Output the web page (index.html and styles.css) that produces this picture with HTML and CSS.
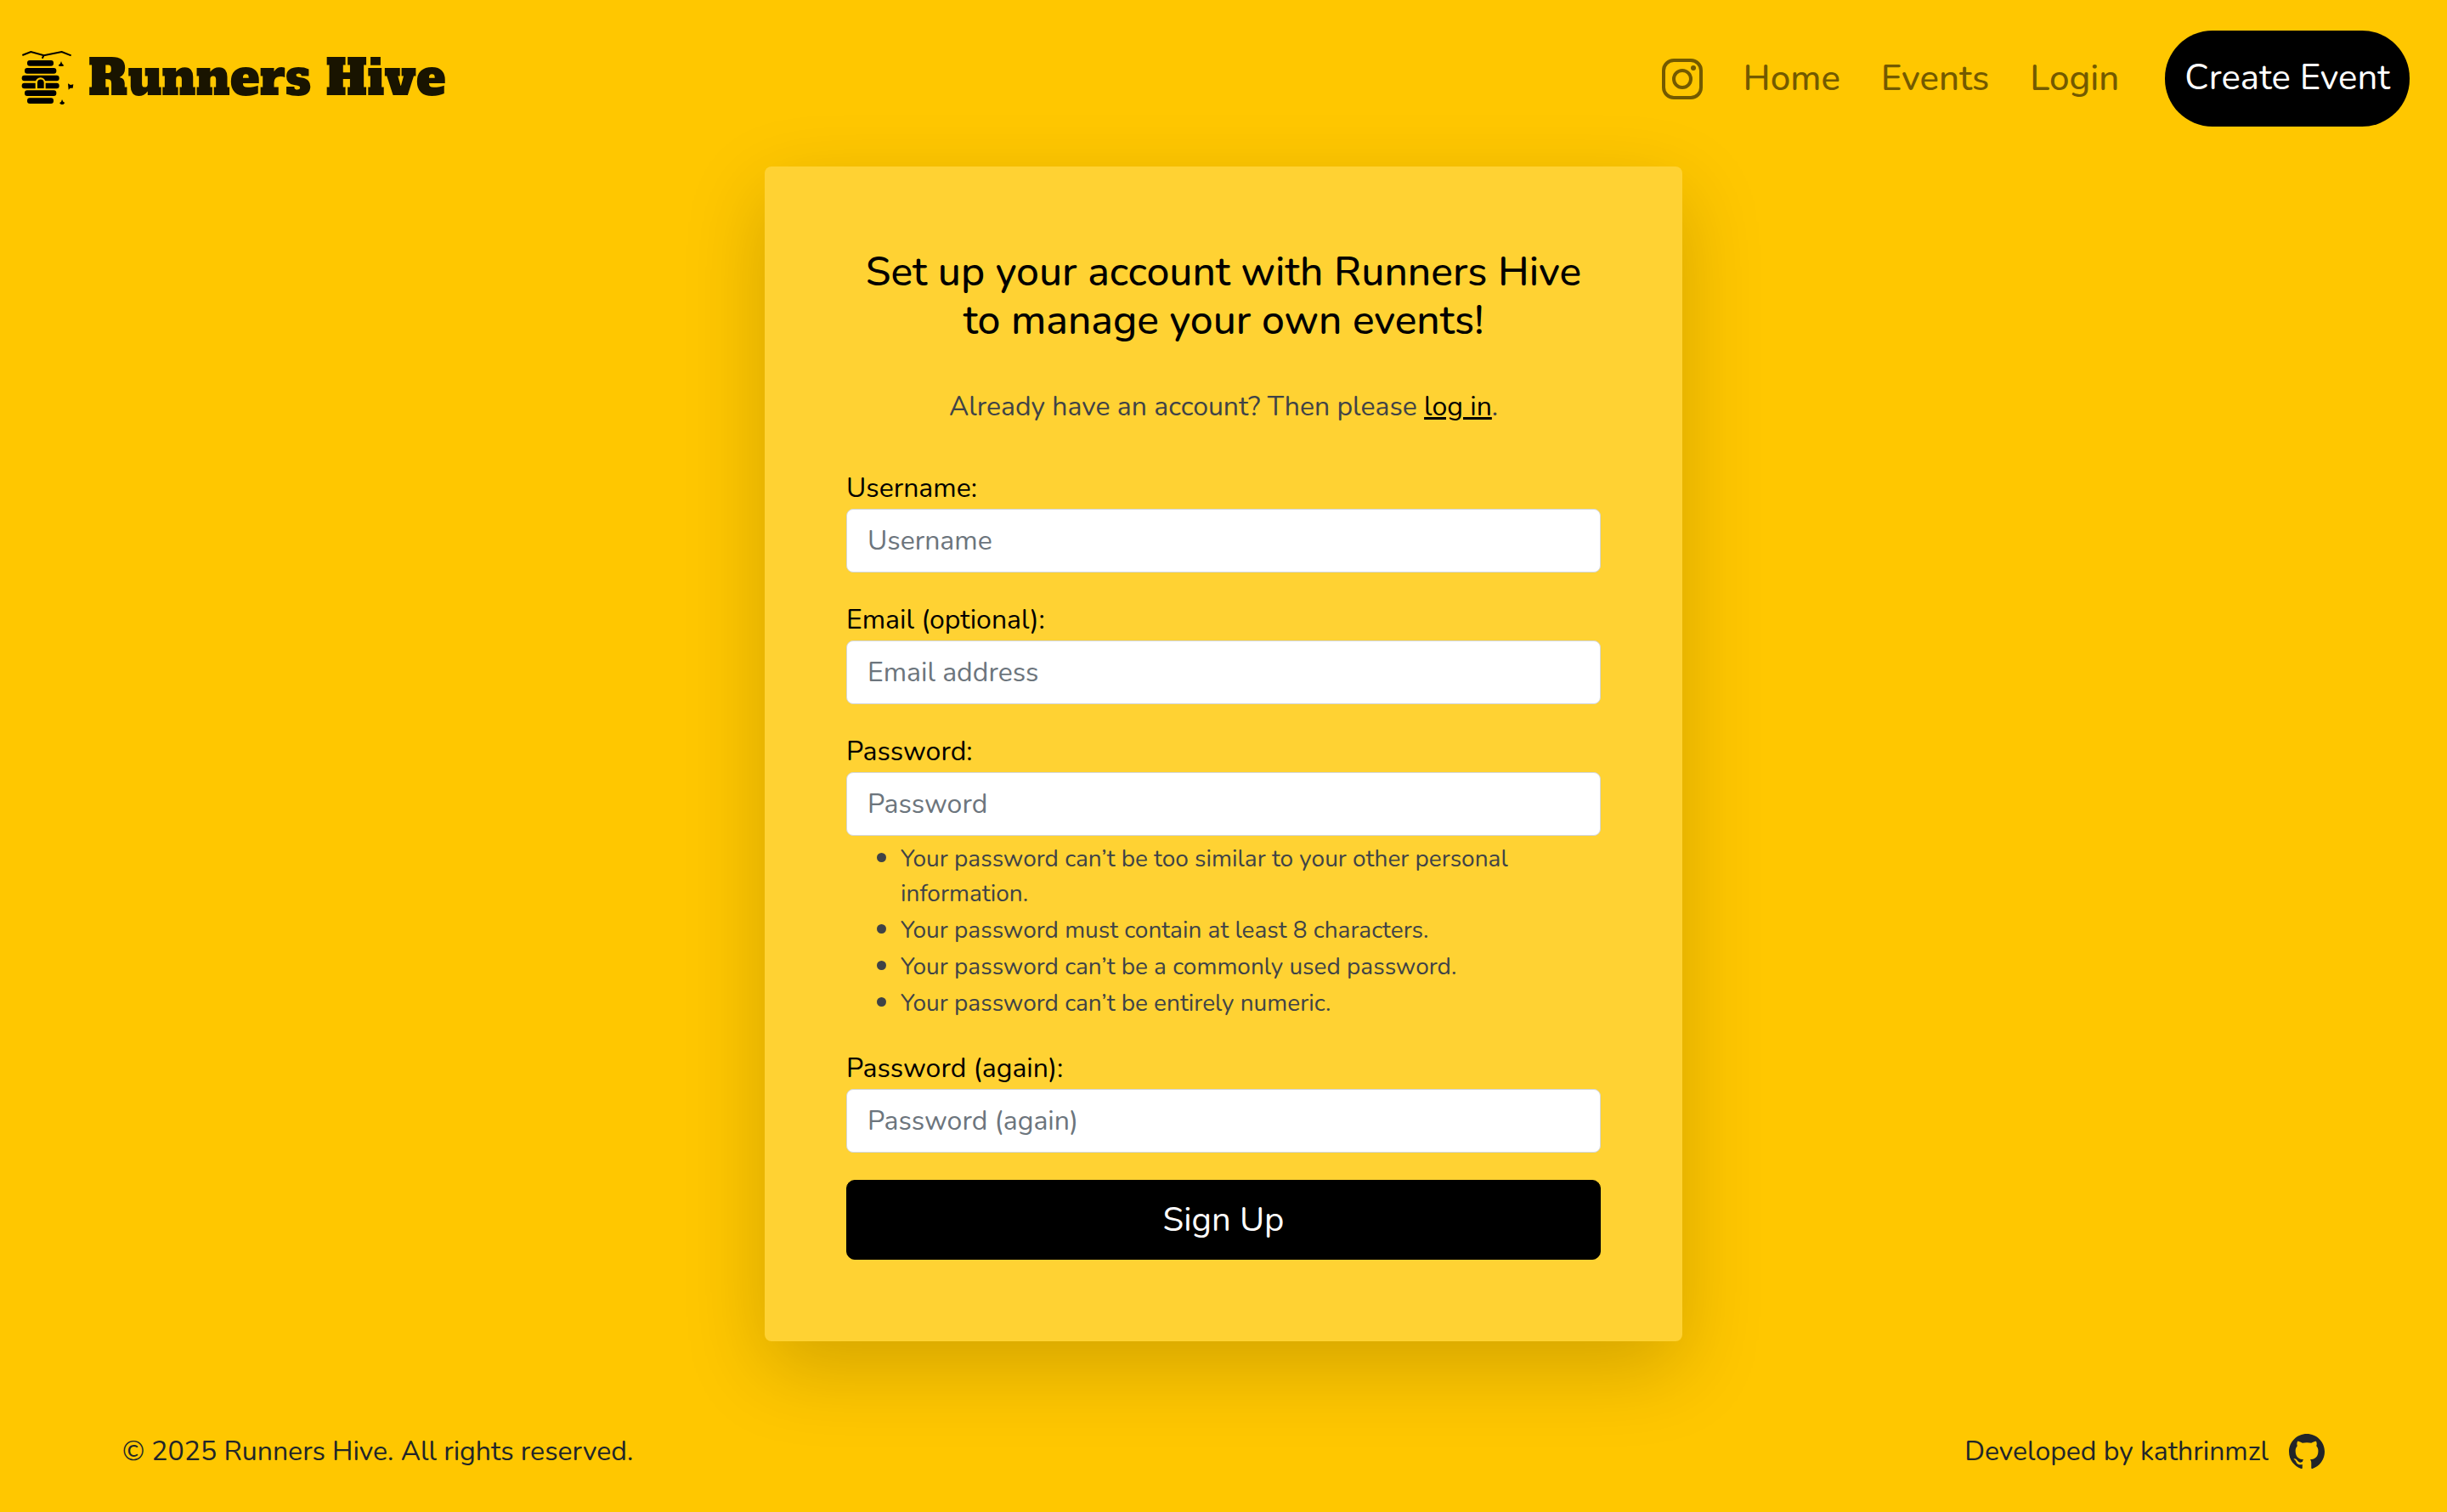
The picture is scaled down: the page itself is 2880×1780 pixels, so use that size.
FILE: index.html
```html
<!DOCTYPE html>
<html lang="en">
<head>
  <meta charset="utf-8">
  <meta name="viewport" content="width=device-width, initial-scale=1">
  <title>Sign Up - Runners Hive</title>
  <link rel="stylesheet" href="styles.css">
</head>
<body>
  <header class="navbar">
    <a class="brand" href="#">
      <svg class="brand-icon" viewBox="24 30 192 192" aria-hidden="true">
        <path d="M31 45 61 33 107 46 170 33 203 46M107 45 101 56" fill="none" stroke="#000" stroke-width="6"/>
        <g fill="#000">
          <rect x="48" y="63" width="93" height="20" rx="9"/>
          <rect x="39" y="90" width="112" height="20" rx="9"/>
          <rect x="29" y="116" width="132" height="20" rx="9"/>
          <rect x="29" y="143" width="132" height="20" rx="9"/>
          <rect x="39" y="169" width="112" height="20" rx="9"/>
          <rect x="48" y="196" width="93" height="20" rx="9"/>
          <path d="M168 66 171 74 178 82 172 84H162L158 81 165 74ZM192 145 201 150 211 148 209 161 200 161 194 167ZM171 201 175 209 181 213 175 219H168L162 214 168 209Z"/>
        </g>
        <path d="M77 165V142a18 18 0 0 1 36 0v23Z" fill="#ffc700"/>
        <path d="M84 162V142a11 11 0 0 1 23 0v20Z" fill="#000"/>
      </svg>
      <span>Runners Hive</span>
    </a>
    <nav class="nav" aria-label="Main">
      <a class="nav-link" href="#" aria-label="Instagram">
        <svg class="nav-icon" viewBox="0 0 48 48" fill="none" stroke="currentColor" stroke-width="4" aria-hidden="true">
          <rect x="2" y="2" width="44" height="44" rx="12"/>
          <circle cx="24" cy="24" r="10"/>
          <circle cx="37" cy="11" r="3" fill="currentColor" stroke="none"/>
        </svg>
      </a>
      <a class="nav-link" href="#">Home</a>
      <a class="nav-link" href="#">Events</a>
      <a class="nav-link" href="#">Login</a>
      <a class="nav-button" href="#">Create Event</a>
    </nav>
  </header>

  <main class="main">
    <section class="card">
      <h1 class="title">Set up your account with Runners Hive to manage your own events!</h1>
      <p class="intro">Already have an account? Then please <a href="#">log in</a>.</p>
      <form class="form">
        <div class="field">
          <label for="username">Username:</label>
          <input id="username" type="text" placeholder="Username">
        </div>
        <div class="field">
          <label for="email">Email (optional):</label>
          <input id="email" type="email" placeholder="Email address">
        </div>
        <div class="field">
          <label for="password1">Password:</label>
          <input id="password1" type="password" placeholder="Password" aria-describedby="password-help">
          <ul class="help" id="password-help">
            <li>Your password can’t be too similar to your other personal information.</li>
            <li>Your password must contain at least 8 characters.</li>
            <li>Your password can’t be a commonly used password.</li>
            <li>Your password can’t be entirely numeric.</li>
          </ul>
        </div>
        <div class="field">
          <label for="password2">Password (again):</label>
          <input id="password2" type="password" placeholder="Password (again)">
        </div>
        <button class="submit" type="submit">Sign Up</button>
      </form>
    </section>
  </main>

  <footer class="footer">
    <span>© 2025 Runners Hive. All rights reserved.</span>
    <div class="credit">
      <span>Developed by kathrinmzl</span>
      <a href="#" aria-label="GitHub">
        <svg class="github-icon" viewBox="0 0 16 16" fill="currentColor" aria-hidden="true">
          <path d="M8 0C3.58 0 0 3.58 0 8c0 3.54 2.29 6.53 5.47 7.59.4.07.55-.17.55-.38 0-.19-.01-.82-.01-1.49-2.01.37-2.53-.49-2.69-.94-.09-.23-.48-.94-.82-1.13-.28-.15-.68-.52-.01-.53.63-.01 1.08.58 1.23.82.72 1.21 1.87.87 2.33.66.07-.52.28-.87.51-1.07-1.78-.2-3.64-.89-3.64-3.95 0-.87.31-1.59.82-2.15-.08-.2-.36-1.02.08-2.12 0 0 .67-.21 2.2.82.64-.18 1.32-.27 2-.27s1.36.09 2 .27c1.53-1.04 2.2-.82 2.2-.82.44 1.1.16 1.92.08 2.12.51.56.82 1.27.82 2.15 0 3.07-1.87 3.75-3.65 3.95.29.25.54.73.54 1.48v2.2c0 .21.15.46.55.38A8.01 8.01 0 0 0 16 8c0-4.42-3.58-8-8-8"/>
        </svg>
      </a>
    </div>
  </footer>
</body>
</html>
```
FILE: styles.css
```css
* {
  box-sizing: border-box;
}

body {
  display: flex;
  flex-direction: column;
  min-height: 100vh;
  margin: 0;
  background: #ffc700;
  color: #212529;
  font-family: Nunito, Lato, sans-serif;
  font-size: 32px;
  line-height: 48px;
}

.navbar {
  display: flex;
  align-items: center;
  justify-content: space-between;
  padding: 36px 44px 36px 24px;
}

.brand {
  display: flex;
  align-items: center;
  gap: 16px;
  padding-bottom: 2px;
  color: #191400;
  font-family: "Alfa Slab One", "DejaVu Serif Condensed", serif;
  font-size: 58px;
  font-weight: 400;
  line-height: 72px;
  text-decoration: none;
}

.brand-icon {
  width: 64px;
  height: 64px;
}

.nav {
  display: flex;
  align-items: center;
  gap: 48px;
  font-size: 42px;
  line-height: 62px;
}

.nav-link {
  color: #735a00;
  font-weight: 500;
  text-decoration: none;
}

.nav-icon {
  display: block;
  width: 48px;
  height: 48px;
}

.nav-button {
  margin-left: 6px;
  padding: 25px 23px 26px;
  border-radius: 56px;
  background: #000;
  color: #fff;
  text-decoration: none;
}

.main {
  display: flex;
  justify-content: center;
  padding: 11px 24px 0;
}

.card {
  width: 100%;
  max-width: 1080px;
  padding: 96px;
  border-radius: 8px;
  background: #ffd233;
  box-shadow: 0 32px 96px rgba(0, 0, 0, 0.175);
}

.title {
  margin: 0 0 49px;
  color: #000;
  font-size: 48px;
  font-weight: 500;
  line-height: 57px;
  text-align: center;
}

.intro {
  margin: 0 0 48px;
  color: #404347;
  text-align: center;
}

.intro a {
  color: #000;
}

.form {
  display: grid;
  gap: 32px;
}

.field {
  display: grid;
}

.field label {
  color: #000;
}

.field input {
  width: 100%;
  height: 75px;
  padding: 12px 24px;
  border: 1px solid #d3d6d8;
  border-radius: 8px;
  background: #fff;
  color: #212529;
  font: inherit;
}

.field input::placeholder {
  color: #6c757d;
  opacity: 1;
}

.help {
  margin: 5px 0 0;
  padding-left: 64px;
  color: #404347;
  font-size: 28px;
  line-height: 41px;
}

.help li::marker {
  font-size: 32px;
}

.submit {
  padding: 16px;
  border: 1px solid #000;
  border-radius: 10px;
  background: #000;
  color: #fff;
  font-family: inherit;
  font-size: 40px;
  line-height: 60px;
}

.footer {
  display: flex;
  align-items: center;
  justify-content: space-between;
  margin-top: auto;
  padding: 48px 144px 47px;
}

.credit {
  display: flex;
  align-items: center;
  gap: 24px;
}

.credit a {
  color: inherit;
}

.github-icon {
  display: block;
  width: 42px;
  height: 42px;
}
```
